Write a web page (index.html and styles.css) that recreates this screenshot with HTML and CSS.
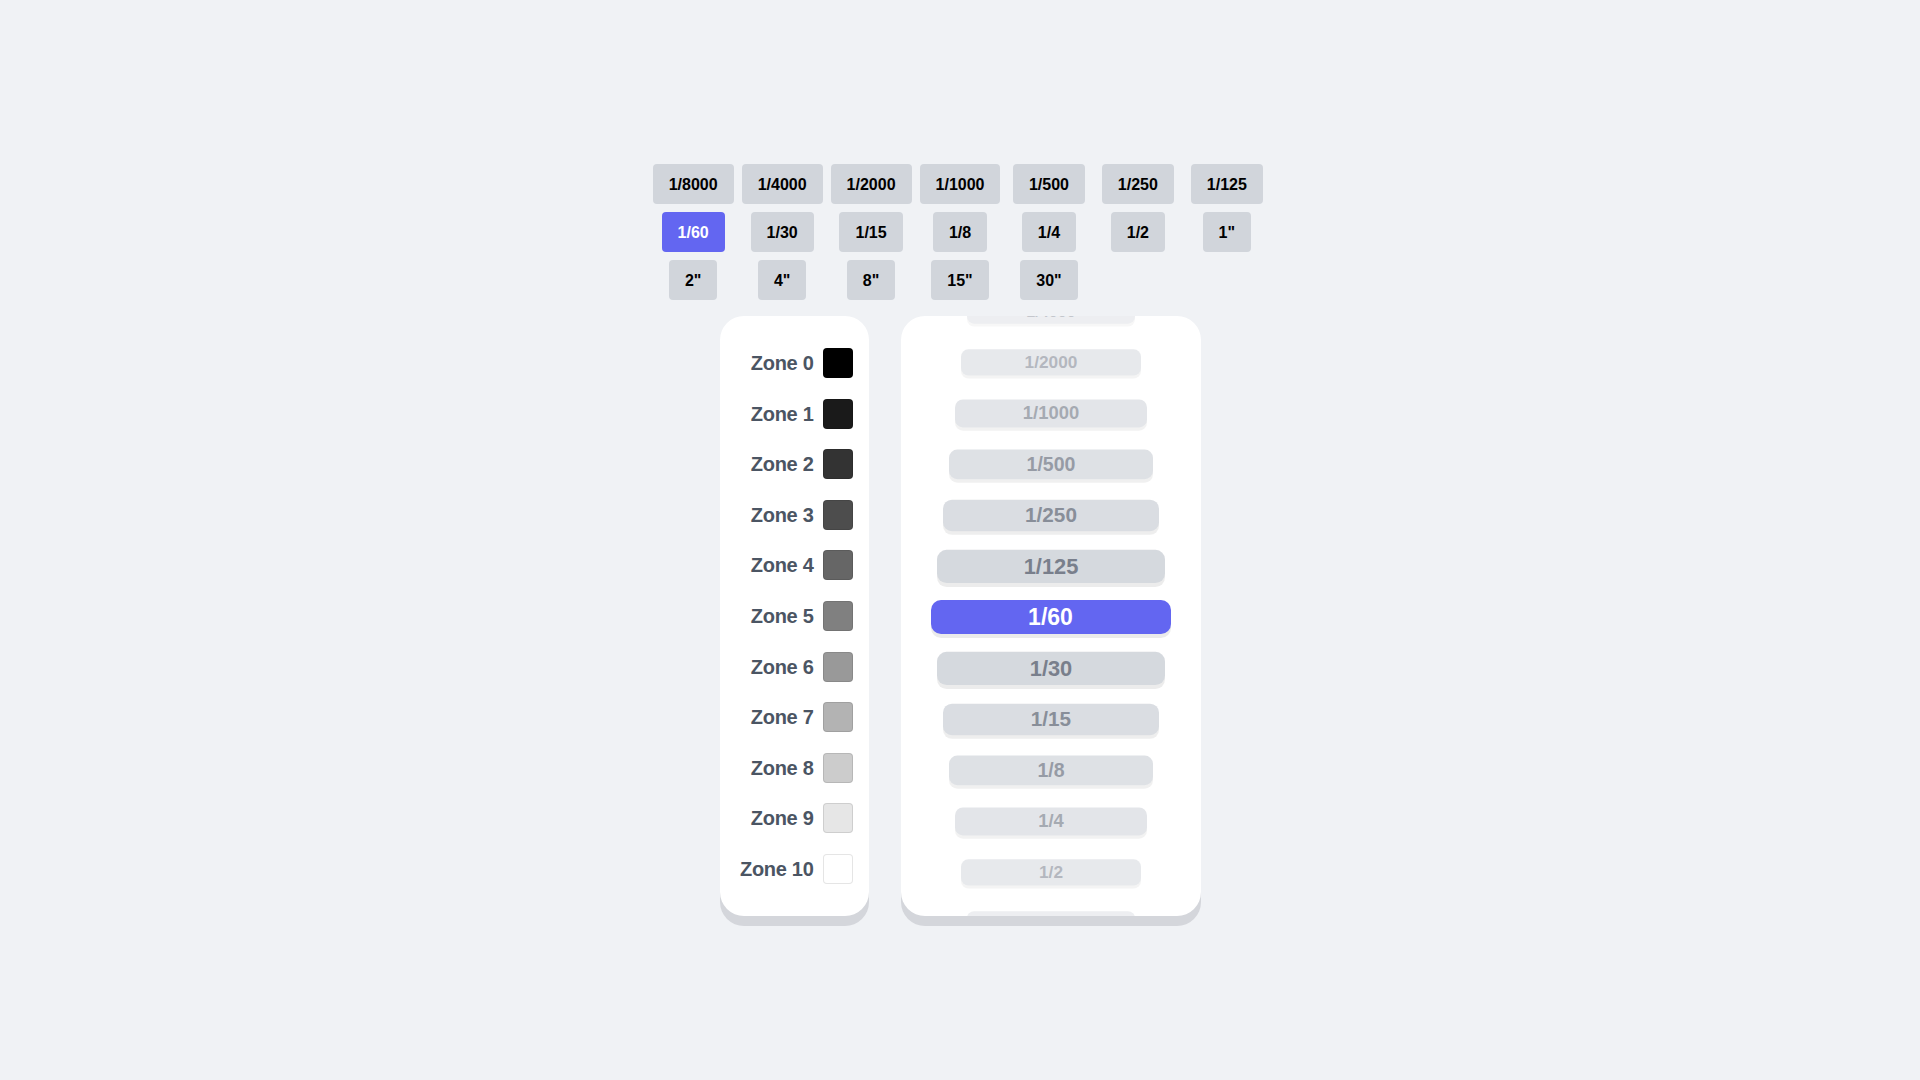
FILE: index.html
```html
<!DOCTYPE html>
<html lang="en">
<head>
<meta charset="utf-8">
<title>Shutter Speeds</title>
<link rel="stylesheet" href="styles.css">
</head>
<body>
<main class="app">
  <div class="speeds">
    <button class="speed">1/8000</button>
    <button class="speed">1/4000</button>
    <button class="speed">1/2000</button>
    <button class="speed">1/1000</button>
    <button class="speed">1/500</button>
    <button class="speed">1/250</button>
    <button class="speed">1/125</button>
    <button class="speed active">1/60</button>
    <button class="speed">1/30</button>
    <button class="speed">1/15</button>
    <button class="speed">1/8</button>
    <button class="speed">1/4</button>
    <button class="speed">1/2</button>
    <button class="speed">1"</button>
    <button class="speed">2"</button>
    <button class="speed">4"</button>
    <button class="speed">8"</button>
    <button class="speed">15"</button>
    <button class="speed">30"</button>
  </div>
  <div class="panels">
    <div class="card zones">
      <div class="zone"><span class="zone-label">Zone 0</span><span class="swatch z0"></span></div>
      <div class="zone"><span class="zone-label">Zone 1</span><span class="swatch z1"></span></div>
      <div class="zone"><span class="zone-label">Zone 2</span><span class="swatch z2"></span></div>
      <div class="zone"><span class="zone-label">Zone 3</span><span class="swatch z3"></span></div>
      <div class="zone"><span class="zone-label">Zone 4</span><span class="swatch z4"></span></div>
      <div class="zone"><span class="zone-label">Zone 5</span><span class="swatch z5"></span></div>
      <div class="zone"><span class="zone-label">Zone 6</span><span class="swatch z6"></span></div>
      <div class="zone"><span class="zone-label">Zone 7</span><span class="swatch z7"></span></div>
      <div class="zone"><span class="zone-label">Zone 8</span><span class="swatch z8"></span></div>
      <div class="zone"><span class="zone-label">Zone 9</span><span class="swatch z9"></span></div>
      <div class="zone"><span class="zone-label">Zone 10</span><span class="swatch z10"></span></div>
    </div>
    <div class="card wheel">
      <div class="wheel-item d6">1/4000</div>
      <div class="wheel-item d5">1/2000</div>
      <div class="wheel-item d4">1/1000</div>
      <div class="wheel-item d3">1/500</div>
      <div class="wheel-item d2">1/250</div>
      <div class="wheel-item d1">1/125</div>
      <div class="wheel-item d0 selected">1/60</div>
      <div class="wheel-item d1">1/30</div>
      <div class="wheel-item d2">1/15</div>
      <div class="wheel-item d3">1/8</div>
      <div class="wheel-item d4">1/4</div>
      <div class="wheel-item d5">1/2</div>
      <div class="wheel-item d6">1"</div>
    </div>
  </div>
</main>
</body>
</html>
```

FILE: styles.css
```css
* { box-sizing: border-box; }

html, body {
  margin: 0;
  padding: 0;
}

body {
  background: #f0f2f5;
  font-family: "Liberation Sans", Arial, sans-serif;
  min-height: 100vh;
}

.app {
  min-height: 100vh;
  display: flex;
  flex-direction: column;
  align-items: center;
  justify-content: center;
  gap: 16px;
}

.speeds {
  display: grid;
  grid-template-columns: repeat(7, 1fr);
  gap: 8px;
  justify-items: center;
}

.speed {
  border: none;
  margin: 0;
  height: 40px;
  padding: 1px 16px 0;
  border-radius: 4px;
  background: #d1d5db;
  color: #000;
  font-family: "Liberation Sans", Arial, sans-serif;
  font-weight: 700;
  font-size: 16px;
  line-height: 24px;
  white-space: nowrap;
  cursor: pointer;
}

.speed.active {
  background: #6366f1;
  color: #fff;
}

.panels {
  display: flex;
  gap: 32px;
}

.card {
  background: #fff;
  height: 600px;
  border-radius: 24px;
  box-shadow: 0 10px 0 #d4d6db;
}

.zones {
  width: 149px;
  padding: 32px 16px 32px 0;
  display: flex;
  flex-direction: column;
  justify-content: space-between;
}

.zone {
  display: flex;
  justify-content: flex-end;
  align-items: center;
  gap: 9px;
  height: 30px;
}

.zone-label {
  font-size: 20px;
  font-weight: 700;
  color: #4b5563;
  white-space: nowrap;
  letter-spacing: -0.3px;
  padding-top: 1px;
}

.swatch {
  width: 30px;
  height: 30px;
  border-radius: 4px;
  border: 1px solid rgba(0, 0, 0, 0.1);
}

.z0 { background: #000000; }
.z1 { background: #1a1a1a; }
.z2 { background: #333333; }
.z3 { background: #4d4d4d; }
.z4 { background: #666666; }
.z5 { background: #808080; }
.z6 { background: #999999; }
.z7 { background: #b3b3b3; }
.z8 { background: #cccccc; }
.z9 { background: #e6e6e6; }
.z10 { background: #ffffff; }

.wheel {
  width: 300px;
  overflow: hidden;
  display: flex;
  flex-direction: column;
  align-items: center;
  justify-content: center;
  gap: 16.5px;
  padding-top: 2px;
}

.wheel-item {
  flex-shrink: 0;
  width: 240px;
  height: 34.5px;
  border-radius: 10px;
  background: #d1d5db;
  color: #6b7280;
  font-size: 23px;
  font-weight: 700;
  line-height: 35px;
  text-align: center;
  box-shadow: 0 4px 0 rgba(0, 0, 0, 0.08);
}

.wheel-item.selected {
  background: #6366f1;
  color: #fff;
}

.d0 { transform: scale(1); opacity: 1; }
.d1 { transform: scale(0.95); opacity: 0.9; }
.d2 { transform: scale(0.9); opacity: 0.8; }
.d3 { transform: scale(0.85); opacity: 0.7; }
.d4 { transform: scale(0.8); opacity: 0.6; }
.d5 { transform: scale(0.75); opacity: 0.5; }
.d6 { transform: scale(0.7); opacity: 0.4; }
```
